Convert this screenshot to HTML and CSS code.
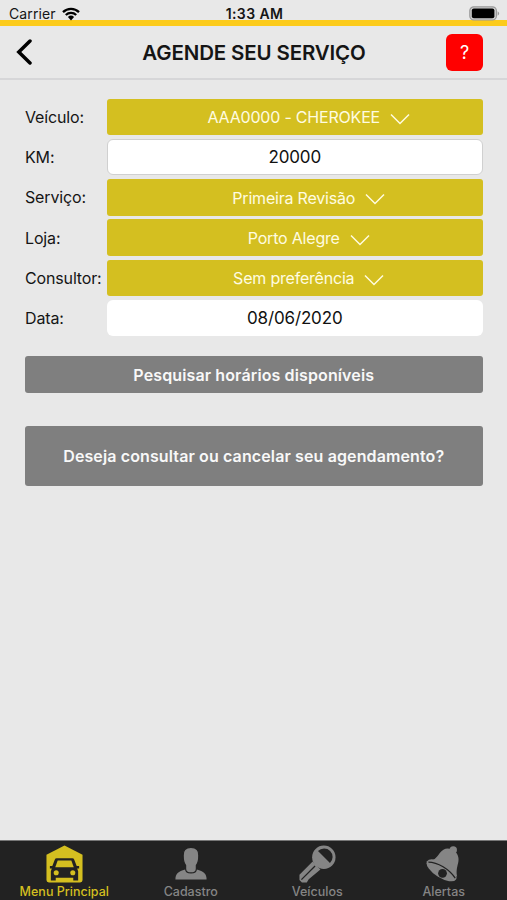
FILE: index.html
```html
<!DOCTYPE html>
<html lang="pt-BR">
<head>
    <meta charset="UTF-8">
    <meta name="viewport" content="width=device-width, initial-scale=1.0">
    <title>Agende seu serviço</title>
    <link rel="stylesheet" href="styles.css">
</head>
<body>
    <div class="app">
        <div class="status-bar">
            <div class="carrier">
                <span>Carrier</span>
                <svg class="wifi" viewBox="0 0 18 14">
                    <path d="M1 5.2a11.5 11.5 0 0 1 16 0M3.8 8a7.5 7.5 0 0 1 10.4 0" fill="none" stroke="#000" stroke-width="2.3"/>
                    <path d="M5.9 10a4.5 4.5 0 0 1 6.2 0L9 13.4z"/>
                </svg>
            </div>
            <span class="time">1:33 AM</span>
            <svg class="battery" viewBox="0 0 31 15">
                <rect x="0.8" y="0.8" width="26.6" height="13.2" rx="4" fill="#d0d0d0" stroke="#999" stroke-width="1.2"/>
                <rect x="2.8" y="2.6" width="22.6" height="9.6" rx="2"/>
                <path d="M28.6 5.2q3 2.2 0 4.6z" fill="#999"/>
            </svg>
        </div>

        <header class="header">
            <button class="back" type="button" aria-label="Voltar">
                <svg viewBox="0 0 16 26"><path d="M14 2L2.8 13 14 24" fill="none" stroke="#000" stroke-width="3.5" stroke-linecap="round"/></svg>
            </button>
            <h1>AGENDE SEU SERVIÇO</h1>
            <button class="help" type="button">?</button>
        </header>

        <main class="content">
            <form class="form">
                <div class="form-group">
                    <label>Veículo:</label>
                    <button class="select" type="button"><span>AAA0000 - CHEROKEE</span><svg class="chevron" viewBox="0 0 20 12"><path d="M1 1.5L10 10.5l9-9"/></svg></button>
                </div>
                <div class="form-group">
                    <label for="km">KM:</label>
                    <input class="field km" type="text" id="km" value="20000">
                </div>
                <div class="form-group">
                    <label>Serviço:</label>
                    <button class="select" type="button"><span>Primeira Revisão</span><svg class="chevron" viewBox="0 0 20 12"><path d="M1 1.5L10 10.5l9-9"/></svg></button>
                </div>
                <div class="form-group">
                    <label>Loja:</label>
                    <button class="select" type="button"><span>Porto Alegre</span><svg class="chevron" viewBox="0 0 20 12"><path d="M1 1.5L10 10.5l9-9"/></svg></button>
                </div>
                <div class="form-group">
                    <label>Consultor:</label>
                    <button class="select" type="button"><span>Sem preferência</span><svg class="chevron" viewBox="0 0 20 12"><path d="M1 1.5L10 10.5l9-9"/></svg></button>
                </div>
                <div class="form-group">
                    <label for="date">Data:</label>
                    <input class="field" type="text" id="date" value="08/06/2020">
                </div>
            </form>
            <button class="action search" type="button">Pesquisar horários disponíveis</button>
            <button class="action cancel" type="button">Deseja consultar ou cancelar seu agendamento?</button>
        </main>

        <nav class="tabs">
            <a class="tab active">
                <svg viewBox="0 0 40 40">
                    <path d="M20 0.5L38.5 10V36q0 2.5-2.5 2.5H4Q1.5 38.5 1.5 36V10z" fill="currentColor"/>
                    <path d="M12 13.5h16q1.5 0 2 1.5l2.5 6.5H35V24h-2l1 3v9.5h-5v-3H11v3H6V27l1-3H5v-2.5h2.5L10 15q.5-1.5 2-1.5z" fill="#222"/>
                    <path d="M13 15.8h14l2.5 7h-19z" fill="currentColor"/>
                    <circle cx="11.5" cy="28.5" r="2.6" fill="currentColor"/>
                    <circle cx="28.5" cy="28.5" r="2.6" fill="currentColor"/>
                </svg>
                <span>Menu Principal</span>
            </a>
            <a class="tab">
                <svg viewBox="0 0 40 40">
                    <path d="M4.500 35.500c0-6.500 3-8.500 10-10.500h12c7 2 10 4 10 10.500z" fill="currentColor"/>
                    <path d="M20.500 2.500c5.500 0 8.500 3 8 8.500 0 5-1 8-2.500 10v3.500c0 5.500-11 5.500-11 0V21c-1.500-2-2.500-5-2.500-10-.5-5.500 2.500-8.500 8-8.500z" fill="currentColor" stroke="#222" stroke-width="1.200"/>
                </svg>
                <span>Cadastro</span>
            </a>
            <a class="tab">
                <svg viewBox="0 0 40 40">
                    <path d="M15 17L1.500 30.500V36l2.500 2.500h5L11 35l12-10z" fill="currentColor"/>
                    <circle cx="26.500" cy="12.500" r="12" fill="currentColor"/>
                    <path d="M20.500 6.200a8.700 8.700 0 1 1 12.300 12.300z" fill="#222"/>
                    <path d="M3.500 35.500L17.500 21.500" stroke="#222" stroke-width="1.300"/>
                </svg>
                <span>Veículos</span>
            </a>
            <a class="tab">
                <svg viewBox="0 0 40 40">
                    <circle cx="30" cy="5" r="3.8" fill="currentColor"/>
                    <path d="M28 4.500c6.500 2.500 8.500 8 7 14-1.500 6-2 9-1 14L6.500 16.500c5-1.500 6.500-4 9.500-8 3.500-4.500 7.500-6 12-4z" fill="currentColor"/>
                    <ellipse cx="18" cy="26" rx="17.500" ry="7.500" transform="rotate(32 18 26)" fill="currentColor"/>
                    <path d="M4.500 17.500c9.500 0 21.500 7.500 27.500 16.500" fill="none" stroke="#222" stroke-width="1.300"/>
                    <circle cx="19" cy="29" r="4.500" fill="#222"/>
                </svg>
                <span>Alertas</span>
            </a>
        </nav>
    </div>
</body>
</html>
```

FILE: styles.css
```css
* {
    margin: 0;
    padding: 0;
    box-sizing: border-box;
    font-family: Inter, "Liberation Sans", sans-serif;
}

body {
    background: #e8e8e8;
    color: #151515;
}

.app {
    display: flex;
    flex-direction: column;
    height: 100vh;
    overflow: hidden;
}

button {
    border: none;
    cursor: pointer;
}

.status-bar {
    display: grid;
    grid-template-columns: 1fr auto 1fr;
    align-items: center;
    height: 26px;
    padding: 6px 7px 0 9px;
    border-bottom: 6px solid #fccb1b;
    line-height: 14px;
}

.carrier {
    display: flex;
    align-items: center;
    gap: 6px;
    font-size: 14px;
    letter-spacing: 0.1px;
}

.wifi {
    width: 18px;
    height: 14px;
}

.time {
    font-size: 14px;
    font-weight: 600;
    letter-spacing: 0.4px;
}

.battery {
    justify-self: end;
    width: 31px;
    height: 15px;
}

.header {
    display: grid;
    grid-template-columns: 46px 1fr 37px;
    align-items: center;
    height: 54px;
    padding: 0 24px 0 16px;
    border-bottom: 2px solid #d6d6d8;
}

.header h1 {
    padding-top: 1px;
    text-align: center;
    font-size: 20.5px;
    font-weight: 600;
    letter-spacing: -0.15px;
}

.back {
    display: flex;
    background: none;
}

.back svg {
    width: 16px;
    height: 26px;
}

.help {
    height: 37px;
    border-radius: 6px;
    background: #ff0000;
    color: white;
    font-size: 18px;
}

.content {
    flex: 1;
    display: flex;
    flex-direction: column;
    padding: 18.5px 24.5px 0 25px;
}

.form {
    display: grid;
    gap: 3.8px;
}

.form-group {
    display: grid;
    grid-template-columns: 82px 1fr;
    align-items: center;
    height: 36.5px;
}

label {
    font-size: 16px;
    letter-spacing: -0.15px;
    white-space: nowrap;
}

.select {
    display: flex;
    align-items: center;
    justify-content: center;
    gap: 10px;
    height: 100%;
    padding: 1px 0 0 28px;
    border-radius: 3px;
    background: #d4bf20;
    color: #fffce0;
    font-size: 16px;
    letter-spacing: -0.2px;
}

.chevron {
    width: 20px;
    height: 12px;
    margin-top: 3px;
    fill: none;
    stroke: #fffce0;
    stroke-width: 1.5;
}

.field {
    width: 100%;
    height: 100%;
    border: 1px solid transparent;
    border-radius: 6px;
    background: white;
    color: #111;
    text-align: center;
    font-size: 17px;
    letter-spacing: -0.15px;
}

.km {
    border-color: #d0d0d0;
}

.action {
    border-radius: 3px;
    background: #7f7f7f;
    color: #f8f8f8;
    font-size: 16px;
    font-weight: 600;
    letter-spacing: 0.12px;
}

.search {
    height: 37px;
    margin-top: 20px;
}

.cancel {
    height: 60px;
    margin-top: 33px;
}

.tabs {
    display: grid;
    grid-template-columns: repeat(4, 1fr);
    height: 60px;
    padding-left: 1px;
    background: #222;
    border-top: 1px solid #777;
}

.tab {
    display: flex;
    flex-direction: column;
    align-items: center;
    padding-top: 4px;
    color: #858585;
    font-size: 12.5px;
    font-weight: 500;
    line-height: 16px;
}

.tab svg {
    width: 39px;
    height: 39px;
}

.tab.active {
    color: #d4bf20;
}
```
